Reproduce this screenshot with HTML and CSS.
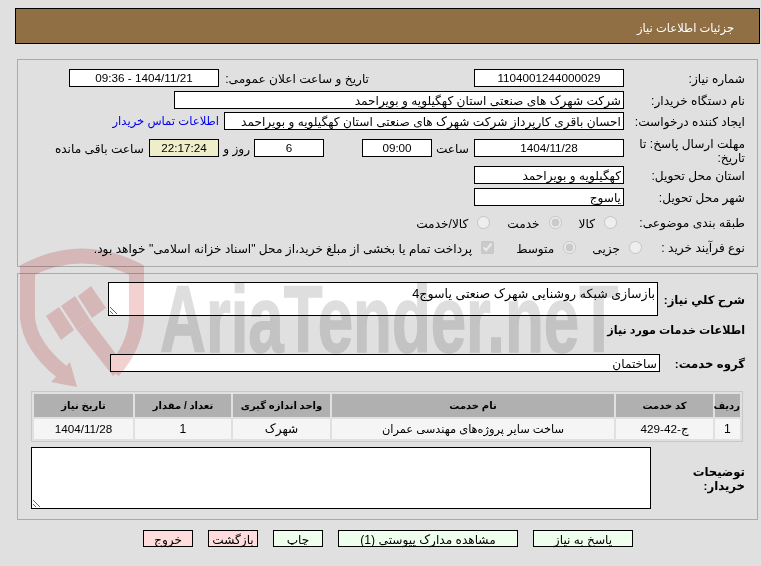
FILE: index.html
```html
<!DOCTYPE html>
<html lang="fa" dir="rtl">
<head>
<meta charset="utf-8">
<title>جزئیات اطلاعات نیاز</title>
<link rel="stylesheet" href="styles.css">
</head>
<body>
<div class="page">
  <header class="title-bar"><h1>جزئیات اطلاعات نیاز</h1></header>

  <section class="panel panel-info">
    <div class="row h22">
      <div class="label">شماره نیاز:</div>
      <div class="field w150 center">1104001244000029</div>
      <div class="label label-date">تاریخ و ساعت اعلان عمومی:</div>
      <div class="field w150 center">1404/11/21 - 09:36</div>
    </div>
    <div class="row h21">
      <div class="label">نام دستگاه خریدار:</div>
      <div class="field w450">شرکت شهرک های صنعتی استان کهگیلویه و بویراحمد</div>
    </div>
    <div class="row h27">
      <div class="label">ایجاد کننده درخواست:</div>
      <div class="field w400">احسان باقری کارپرداز شرکت شهرک های صنعتی استان کهگیلویه و بویراحمد</div>
      <a class="contact" href="#">اطلاعات تماس خریدار</a>
    </div>
    <div class="row h27">
      <div class="label label-wrap">مهلت ارسال پاسخ: تا تاریخ:</div>
      <div class="field w150 center">1404/11/28</div>
      <div class="unit u-hour">ساعت</div>
      <div class="field w70 center">09:00</div>
      <div class="field w70 center m-day">6</div>
      <div class="unit u-day">روز و</div>
      <div class="field w70 center timer">22:17:24</div>
      <div class="unit u-left">ساعت باقی مانده</div>
    </div>
    <div class="row h22">
      <div class="label">استان محل تحویل:</div>
      <div class="field w150">کهگیلویه و بویراحمد</div>
    </div>
    <div class="row h25">
      <div class="label">شهر محل تحویل:</div>
      <div class="field w150">یاسوج</div>
    </div>
    <div class="row h25 options">
      <div class="label">طبقه بندی موضوعی:</div>
      <label class="opt o-kala"><input type="radio" name="cat" disabled><span>کالا</span></label>
      <label class="opt o-khedmat"><input type="radio" name="cat" disabled checked><span>خدمت</span></label>
      <label class="opt o-both"><input type="radio" name="cat" disabled><span>کالا/خدمت</span></label>
    </div>
    <div class="row options">
      <div class="label">نوع فرآیند خرید :</div>
      <label class="opt o-jozi"><input type="radio" name="proc" disabled><span>جزیی</span></label>
      <label class="opt o-motavaset"><input type="radio" name="proc" disabled checked><span>متوسط</span></label>
      <label class="opt o-pay"><input type="checkbox" disabled checked><span>پرداخت تمام یا بخشی از مبلغ خرید،از محل "اسناد خزانه اسلامی" خواهد بود.</span></label>
    </div>
  </section>

  <section class="panel panel-detail">
    <div class="row desc">
      <div class="label-bold l-desc">شرح کلي نیاز:</div>
      <textarea class="area area-desc" readonly>بازسازی شبکه روشنایی شهرک صنعتی یاسوج4</textarea>
    </div>
    <div class="section-title">اطلاعات خدمات مورد نیاز</div>
    <div class="row group">
      <div class="label-bold l-group">گروه خدمت:</div>
      <div class="field w550">ساختمان</div>
    </div>
    <table class="grid">
      <thead>
        <tr>
          <th class="c-row">ردیف</th>
          <th class="c-code">کد خدمت</th>
          <th class="c-name">نام خدمت</th>
          <th class="c-unit">واحد اندازه گیری</th>
          <th class="c-qty">تعداد / مقدار</th>
          <th class="c-date">تاریخ نیاز</th>
        </tr>
      </thead>
      <tbody>
        <tr>
          <td>1</td>
          <td class="num">ج-42-429</td>
          <td class="name-cell">ساخت سایر پروژه‌های مهندسی عمران</td>
          <td>شهرک</td>
          <td>1</td>
          <td class="num">1404/11/28</td>
        </tr>
      </tbody>
    </table>
    <div class="row notes">
      <div class="label-bold l-notes">توضیحات خریدار:</div>
      <textarea class="area area-notes" readonly></textarea>
    </div>
  </section>

  <nav class="actions">
    <button class="btn ok b-reply" type="button">پاسخ به نیاز</button>
    <button class="btn ok b-docs" type="button">مشاهده مدارک پیوستی (1)</button>
    <button class="btn ok b-small" type="button">چاپ</button>
    <button class="btn bad b-small" type="button">بازگشت</button>
    <button class="btn bad b-small" type="button">خروج</button>
  </nav>
</div>

<svg class="watermark" viewBox="0 0 761 566" aria-hidden="true">
  <g class="wm-red">
    <path class="wm-stroke" d="M27.5 320 V270 Q82 242 136.5 270 V320 Q134 348 113 371"/>
    <path class="wm-stroke" d="M27.5 318 Q30 346 62 372"/>
    <polygon points="51,382 70,362 77,387"/>
    <polygon points="46,316 59,307 74,330 61,340"/>
    <polygon points="61,306 75,296 91,321 77,330"/>
    <polygon points="78,296 91,286 106,308 92,318"/>
    <polygon points="77,330 91,321 125,366 113,376"/>
  </g>
  <text class="wm-text" x="160" y="352" textLength="458" lengthAdjust="spacingAndGlyphs">AriaTender.neT</text>
</svg>
</body>
</html>
```

FILE: styles.css
```css
* { box-sizing: border-box; }
html, body { margin: 0; padding: 0; }
body {
  background: #e0e0e0;
  color: #000;
  font-family: "Liberation Sans", "DejaVu Sans", sans-serif;
  font-size: 12.15px;
  line-height: 14px;
  overflow: hidden;
}
.page { padding: 8px 1px 0 15px; height: 566px; }

.title-bar {
  height: 36px;
  background: #8f6f43;
  border: 1px solid #000;
  display: flex;
  align-items: center;
  padding: 3px 25px 0 0;
}
.title-bar h1 { margin: 0; font-size: 11.5px; font-weight: normal; color: #fff; }

.panel { border: 1px solid #aaa; margin: 0 2px; }
.panel-info { margin-top: 15px; height: 208px; padding: 9px 12px 0 0; }
.panel-detail { margin-top: 6px; height: 247px; padding: 8px 12px 0 0; }

.row { display: flex; align-items: flex-start; }
.h21 { height: 21px; }
.h22 { height: 22px; }
.h25 { height: 25px; }
.h27 { height: 27px; }

.label { width: 117px; padding-top: 3px; white-space: nowrap; flex: none; }
.label-wrap { white-space: normal; padding-top: 0; padding-left: 4px; margin-top: -2px; }
.label-date { width: 250px; padding-right: 105px; }

.field {
  height: 18px;
  border: 1px solid #000;
  background: #fff;
  padding: 2px 2px 0;
  margin-right: 4px;
  white-space: nowrap;
  overflow: hidden;
  flex: none;
}
.center { text-align: center; font-size: 11.7px; padding-top: 1px; }
.w70 { width: 70px; }
.w150 { width: 150px; }
.w400 { width: 400px; }
.w450 { width: 450px; }
.w550 { width: 550px; margin: 0; }
.timer { background: #eeeecb; margin-right: 4px; }
.m-day { margin-right: 38px; }

.label-date + .field { margin-right: 5px; }
.contact { color: #0000ee; text-decoration: none; margin-right: 5px; padding-top: 2px; white-space: nowrap; font-size: 11.6px; }

.unit { padding-top: 3px; white-space: nowrap; flex: none; }
.u-hour { width: 33px; margin-right: 5px; }
.u-day { width: 27px; margin-right: 4px; }
.u-left { margin-right: 5px; }

.options .label { padding-top: 3px; }
.opt { display: flex; align-items: center; gap: 9px; white-space: nowrap; height: 18px; }
.opt span { padding-top: 3px; }
.opt input { margin: 0; width: 13px; height: 13px; flex: none; }
.o-kala { margin-right: 11px; }
.o-khedmat { margin-right: 17px; }
.o-both { margin-right: 17px; }
.o-jozi { margin-right: -14px; }
.o-motavaset { margin-right: 16px; }
.o-pay { margin-right: 22px; }

.label-bold { font-weight: bold; white-space: nowrap; flex: none; font-size: 11.7px; }
.desc { height: 41px; }
.l-desc { width: 87px; padding-top: 11px; }
.area {
  border: 1px solid #000;
  background: #fff;
  border-radius: 0;
  margin: 0;
  padding: 4px 2px 0;
  font: inherit;
  display: block;
  flex: none;
  outline: none;
}
.area-desc { width: 550px; height: 34px; font-size: 12.6px; }
.section-title { font-weight: bold; height: 31px; font-size: 11.2px; }
.group { height: 37px; }
.l-group { width: 85px; padding-top: 3px; }

.grid {
  width: 712px;
  margin: 0 2px 0 0;
  border: 1px solid #c8c8c8;
  border-spacing: 2px;
  border-collapse: separate;
  table-layout: fixed;
}
.grid th, .grid td { padding: 0; text-align: center; }
.grid th { background: #b0b0b0; height: 23px; font-weight: bold; font-size: 10px; }
.grid td { background: #f5f5f5; height: 20px; }
.grid .num { font-size: 11.7px; }
.grid .name-cell { font-size: 11.4px; }
.c-row { width: 25px; }
.c-code { width: 97px; }
.c-name { width: 282px; }
.c-unit { width: 97px; }
.c-qty { width: 96px; }
.c-date { width: 99px; }

.notes { margin-top: 5px; }
.l-notes { width: 94px; white-space: normal; padding-top: 18px; }
.area-notes { width: 620px; height: 62px; }

.actions { display: flex; gap: 15px; padding: 10px 127px 0 0; }
.btn {
  height: 17px;
  border: 1px solid #000;
  border-radius: 0;
  padding: 2px 0 0;
  font: inherit;
  color: #000;
  flex: none;
}
.ok { background: #eeffee; }
.bad { background: #ffdddd; }
.b-reply { width: 100px; }
.b-docs { width: 180px; }
.b-small { width: 50px; }

.watermark {
  position: absolute;
  left: 0;
  top: 0;
  width: 761px;
  height: 566px;
  pointer-events: none;
  mix-blend-mode: multiply;
  direction: ltr;
}
.wm-red polygon { fill: #f4d1d1; }
.wm-stroke { fill: none; stroke: #f4d1d1; stroke-width: 15; }
.wm-text {
  fill: #dedede;
  stroke: #dedede;
  stroke-width: 1.5px;
  font-family: "Liberation Sans", sans-serif;
  font-weight: bold;
  font-size: 95px;
  direction: ltr;
}
```
